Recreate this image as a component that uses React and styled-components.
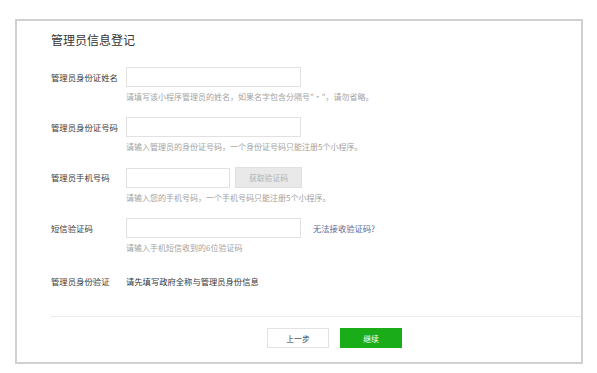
import React from "react";
import styled, { createGlobalStyle } from "styled-components";

const GlobalStyle = createGlobalStyle`
  html, body {
    margin: 0;
    padding: 0;
    background: #fff;
    font-family: "Noto Sans CJK SC", "Noto Sans", sans-serif;
  }
`;

const rows = [
  {
    label: "管理员身份证姓名",
    hint: "请填写该小程序管理员的姓名，如果名字包含分隔号\"·\"，请勿省略。",
  },
  {
    label: "管理员身份证号码",
    hint: "请输入管理员的身份证号码，一个身份证号码只能注册5个小程序。",
  },
  {
    label: "管理员手机号码",
    hint: "请输入您的手机号码，一个手机号码只能注册5个小程序。",
    action: "code",
  },
  {
    label: "短信验证码",
    hint: "请输入手机短信收到的6位验证码",
    action: "link",
  },
];

const App = () => {
  return (
    <>
      <GlobalStyle />
      <Page>
        <Card>
          <Title>管理员信息登记</Title>
          <Form>
            {rows.map((r) => (
              <Row key={r.label}>
                <Label>{r.label}</Label>
                <Field>
                  <Line>
                    <Input $short={r.action === "code"} />
                    {r.action === "code" && <GhostButton>获取验证码</GhostButton>}
                    {r.action === "link" && <Link>无法接收验证码?</Link>}
                  </Line>
                  <Hint>{r.hint}</Hint>
                </Field>
              </Row>
            ))}
            <Row $last>
              <Label>管理员身份验证</Label>
              <Notice>请先填写政府全称与管理员身份信息</Notice>
            </Row>
          </Form>
          <Footer>
            <Button>上一步</Button>
            <Button $primary>继续</Button>
          </Footer>
        </Card>
      </Page>
    </>
  );
};

export default App;

const Page = styled.div`
  padding: 19px 0 0 15px;
`;

const Card = styled.div`
  width: 564px;
  height: 341px;
  border: 2px solid #d0d0d0;
  box-sizing: content-box;
  display: flex;
  flex-direction: column;
`;

const Title = styled.h1`
  margin: 12px 0 0 34px;
  font-size: 12px;
  line-height: 14px;
  font-weight: normal;
  color: #353535;
`;

const Form = styled.div`
  margin: 20px 0 0 34px;
  display: flex;
  flex-direction: column;
  gap: 14px;
`;

const Row = styled.div`
  display: flex;
  align-items: flex-start;
  margin-top: ${(p) => (p.$last ? "3px" : "0")};
`;

const Label = styled.div`
  width: 75px;
  height: 20px;
  display: flex;
  align-items: center;
  font-size: 8.4px;
  color: #3a3a3a;
  white-space: nowrap;
`;

const Field = styled.div`
  display: flex;
  flex-direction: column;
`;

const Line = styled.div`
  display: flex;
  align-items: center;
`;

const Input = styled.div`
  width: ${(p) => (p.$short ? "104px" : "175px")};
  height: 20px;
  border: 1px solid #e1e1e1;
  box-sizing: border-box;
  background: #fff;
`;

const GhostButton = styled.div`
  margin-left: 5px;
  width: 67px;
  height: 21px;
  background: #e9e9e9;
  border: 1px solid #e0e0e0;
  box-sizing: border-box;
  display: flex;
  align-items: center;
  justify-content: center;
  font-size: 7.8px;
  color: #b2b2b2;
`;

const Link = styled.span`
  margin-left: 12px;
  font-size: 8.3px;
  color: #576b95;
  white-space: nowrap;
`;

const Hint = styled.div`
  margin-top: 4px;
  font-size: 8px;
  line-height: 12px;
  color: #a3a3a3;
  white-space: nowrap;
`;

const Notice = styled.div`
  height: 20px;
  display: flex;
  align-items: center;
  font-size: 8.3px;
  color: #353535;
  white-space: nowrap;
`;

const Footer = styled.div`
  margin: auto 0 0 34px;
  border-top: 1px solid #ececec;
  padding: 11px 0 14px 216px;
  display: flex;
  gap: 11px;
`;

const Button = styled.div`
  width: 62px;
  height: 20px;
  box-sizing: border-box;
  display: flex;
  align-items: center;
  justify-content: center;
  font-size: 7.8px;
  border: 1px solid ${(p) => (p.$primary ? "#1aad19" : "#e3e3e3")};
  background: ${(p) => (p.$primary ? "#1aad19" : "#fff")};
  color: ${(p) => (p.$primary ? "#fff" : "#353535")};
`;
